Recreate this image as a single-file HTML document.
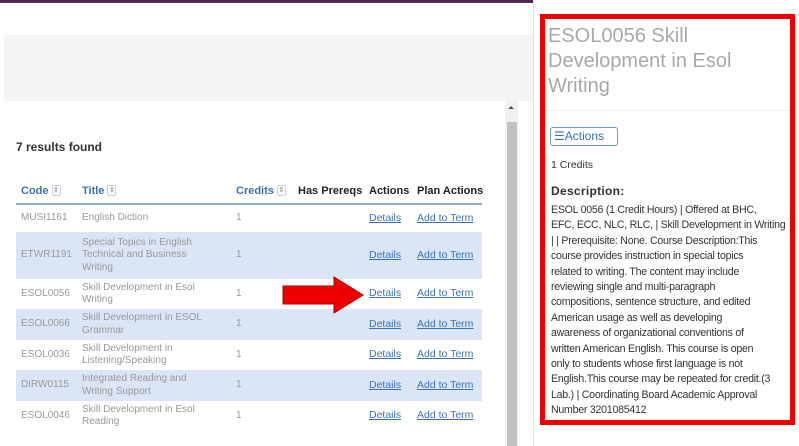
<!DOCTYPE html>
<html><head><meta charset="utf-8"><style>
*{margin:0;padding:0;box-sizing:border-box}
body{width:799px;height:446px;overflow:hidden;background:#fff;font-family:"Liberation Sans",sans-serif;position:relative}
.abs{position:absolute}
.topbar{left:0;top:0;width:533px;height:3px;background:#5a1f4e;border-bottom:1px solid #3a3a8a}
.grey{left:4px;top:35px;width:529px;height:66px;background:#f4f4f4}
.vline{left:533px;top:0;width:1px;height:446px;background:#dde3ea}
.track{left:505px;top:101px;width:13px;height:345px;background:#f1f1f1}
.thumb{left:507px;top:122px;width:10px;height:324px;background:#c1c1c1}
.results{left:16px;top:140px;font-size:12px;font-weight:bold;color:#333}
table{position:absolute;left:16px;top:178px;width:466px;border-collapse:collapse;font-size:10px;table-layout:fixed}
th{text-align:left;font-size:11px;font-weight:bold;height:26px;color:#222;border-bottom:2px solid #8fb0cc;padding:0 0 0 5px;white-space:nowrap}
th.b{color:#3a72b5}
.s{display:inline-block;width:9px;height:11px;border:1px solid #ccd;border-radius:2px;vertical-align:middle;margin-left:3px;font-size:7px;color:#aaa;text-align:center;line-height:9px}
td{color:#999;padding:0 0 0 5px;line-height:12.5px;vertical-align:middle;white-space:nowrap}
td.t{white-space:normal;padding-right:28px}
tr.a td{background:#dae6f5}
td a{color:#3a72b5;text-decoration:underline;font-size:10.5px}
.box{left:540px;top:14px;width:255px;height:411px;border:5px solid #e00}
.title{left:548px;top:24px;font-size:20px;line-height:25px;color:#a8a8a8;width:240px}
.sep{left:545px;top:110px;width:245px;height:1px;background:#eee}
.btn{left:550px;top:127px;width:68px;height:19px;border:1px solid #6a96c8;border-radius:3px;color:#3a72b5;font-size:12px;line-height:17px;padding-left:3px}
.cr{left:551px;top:159px;font-size:10.5px;color:#333}
.dh{left:551px;top:184px;font-size:12px;font-weight:bold;color:#333;letter-spacing:.3px}
.desc{left:551px;top:203px;width:240px;font-size:10.6px;line-height:15.4px;color:#333;letter-spacing:-0.25px;white-space:nowrap}
</style></head><body>
<div class="abs topbar"></div>
<div class="abs grey"></div>
<div class="abs vline"></div>
<div class="abs track"></div>
<div class="abs thumb"></div>
<div class="abs" style="left:508px;top:106px;width:0;height:0;border-left:3px solid transparent;border-right:3px solid transparent;border-bottom:3px solid #555"></div>
<div class="abs results">7 results found</div>
<table>
<colgroup><col style="width:61px"><col style="width:154px"><col style="width:62px"><col style="width:71px"><col style="width:48px"><col style="width:70px"></colgroup>
<tr><th class="b">Code<span class="s">⇕</span></th><th class="b">Title<span class="s">⇕</span></th><th class="b">Credits<span class="s">⇕</span></th><th>Has Prereqs</th><th>Actions</th><th>Plan Actions</th></tr>
<tr style="height:28px"><td>MUSI1161</td><td class="t">English Diction</td><td>1</td><td></td><td><a>Details</a></td><td><a>Add to Term</a></td></tr>
<tr class="a" style="height:47px"><td>ETWR1191</td><td class="t">Special Topics in English Technical and Business Writing</td><td>1</td><td></td><td><a>Details</a></td><td><a>Add to Term</a></td></tr>
<tr style="height:30px"><td>ESOL0056</td><td class="t">Skill Development in Esol Writing</td><td>1</td><td></td><td><a>Details</a></td><td><a>Add to Term</a></td></tr>
<tr class="a" style="height:31px"><td>ESOL0066</td><td class="t">Skill Development in ESOL Grammar</td><td>1</td><td></td><td><a>Details</a></td><td><a>Add to Term</a></td></tr>
<tr style="height:30px"><td>ESOL0036</td><td class="t">Skill Development in Listening/Speaking</td><td>1</td><td></td><td><a>Details</a></td><td><a>Add to Term</a></td></tr>
<tr class="a" style="height:31px"><td>DIRW0115</td><td class="t">Integrated Reading and Writing Support</td><td>1</td><td></td><td><a>Details</a></td><td><a>Add to Term</a></td></tr>
<tr style="height:30px"><td>ESOL0046</td><td class="t">Skill Development in Esol Reading</td><td>1</td><td></td><td><a>Details</a></td><td><a>Add to Term</a></td></tr>
</table>
<svg class="abs" style="left:280px;top:275px" width="86" height="42"><polygon points="3,11 54,11 54,2 83,20 54,38 54,29 3,29" fill="#e00" stroke="#a00" stroke-width="1"/></svg>
<div class="abs box"></div>
<div class="abs title">ESOL0056 Skill Development in Esol Writing</div>
<div class="abs sep"></div>
<div class="abs btn">☰Actions</div>
<div class="abs cr">1 Credits</div>
<div class="abs dh">Description:</div>
<div class="abs desc">ESOL 0056 (1 Credit Hours) | Offered at BHC,<br>EFC, ECC, NLC, RLC, | Skill Development in Writing<br>| | Prerequisite: None. Course Description:This<br>course provides instruction in special topics<br>related to writing. The content may include<br>reviewing single and multi-paragraph<br>compositions, sentence structure, and edited<br>American usage as well as developing<br>awareness of organizational conventions of<br>written American English. This course is open<br>only to students whose first language is not<br>English.This course may be repeated for credit.(3<br>Lab.) | Coordinating Board Academic Approval<br>Number 3201085412</div>
</body></html>
